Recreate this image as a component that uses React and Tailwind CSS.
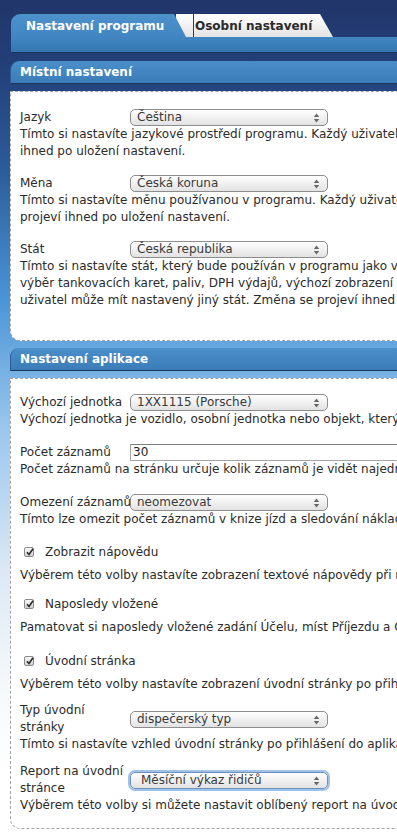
import React from 'react';

const panelText = "text-[12px] leading-[17px] text-[#2b2b2b] whitespace-nowrap";

function Arrows() {
  return (
    <svg width="7" height="10" viewBox="0 0 7 10" className="absolute right-[7px] top-[3px]">
      <path d="M3.5 0.5 L6.2 4 L0.8 4 Z" fill="#666" />
      <path d="M3.5 9.5 L6.2 6 L0.8 6 Z" fill="#666" />
    </svg>
  );
}

function Select({ value, focused }) {
  return (
    <div
      className={
        focused
          ? "relative shrink-0 w-[198px] h-[17px] rounded-[5px] border border-[#6f8fb5] bg-[linear-gradient(#ffffff,#e2e2e2)] shadow-[0_0_0_2px_#9ec2e9] flex items-center pl-[10px] text-[12px] text-[#3a3a3a]"
          : "relative shrink-0 w-[198px] h-[17px] rounded-[5px] border border-[#8d8d8d] bg-[linear-gradient(#ffffff,#e2e2e2)] flex items-center pl-[6px] text-[12px] text-[#3a3a3a]"
      }
    >
      <span className="whitespace-nowrap">{value}</span>
      <Arrows />
    </div>
  );
}

function Checkbox() {
  return (
    <div className="relative shrink-0 w-[10px] h-[10px] rounded-[2px] border border-[#8a8a8a] bg-[linear-gradient(#fafafa,#cfcfcf)]">
      <svg width="10" height="10" viewBox="0 0 10 10" className="absolute left-[0px] top-[-1px]">
        <path d="M2 5.2 L4 7.5 L8 1.8" fill="none" stroke="#2a2a2a" strokeWidth="1.6" />
      </svg>
    </div>
  );
}

function Desc({ lines }) {
  return (
    <div className={`pl-[9px] ${panelText}`}>
      {lines.map((l) => (
        <div key={l}>{l}</div>
      ))}
    </div>
  );
}

function SelectRow({ label, value, lines, focused, className }) {
  return (
    <div className={className}>
      <div className="flex items-center h-[18px]">
        <div className="w-[119px] shrink-0 pl-[9px] text-[12px] text-[#2b2b2b] whitespace-nowrap">{label}</div>
        <Select value={value} focused={focused} />
      </div>
      <Desc lines={lines} />
    </div>
  );
}

function TwoLineRow({ label, value, line, focused, className }) {
  return (
    <div className={className}>
      <div className="flex items-center">
        <div className="w-[119px] shrink-0 pl-[9px] text-[12px] leading-[17px] text-[#2b2b2b]">
          <div>{label[0]}</div>
          <div>{label[1]}</div>
        </div>
        <Select value={value} focused={focused} />
      </div>
      <Desc lines={[line]} />
    </div>
  );
}

function CheckRow({ label, line, className }) {
  return (
    <div className={className}>
      <div className="flex items-center h-[20px] pl-[13px] gap-[11px]">
        <Checkbox />
        <span className="text-[12px] text-[#2b2b2b] whitespace-nowrap">{label}</span>
      </div>
      <div className="mt-[5px]">
        <Desc lines={[line]} />
      </div>
    </div>
  );
}

function Header({ title, className }) {
  return (
    <div className={`h-[23px] rounded-tl-[9px] bg-[linear-gradient(#4b8fca,#3a7cb7)] border-b border-[#1b355a] border-l border-l-[#2d5e92] flex items-center pl-[9px] ${className}`}>
      <span className="text-[12px] font-bold text-white whitespace-nowrap">{title}</span>
    </div>
  );
}

export default function App() {
  return (
    <div className="w-full min-h-screen overflow-hidden font-['DejaVu_Sans',sans-serif] bg-[linear-gradient(180deg,#21366a_0px,#23407a_70px,#2c5c9a_170px,#4a95d6_300px,#9bc7ed_430px,#dbe8f5_570px,#f6f9fc_690px,#ffffff_780px)]">
      <div className="w-[900px] pl-[10px] pt-[14px] pb-[8px]">
        {/* tabs */}
        <div className="flex h-[23px] ml-[1px]">
          <div className="relative z-10 w-[175px] h-full rounded-tl-[9px] bg-[linear-gradient(#4e92cc,#4186c2)] [clip-path:polygon(0_0,163px_0,175px_100%,0_100%)] flex items-center pl-[15px]">
            <span className="text-[12px] font-bold text-white whitespace-nowrap">Nastavení programu</span>
          </div>
          <div className="relative -ml-[10px] w-[157px] h-full rounded-tr-[6px] bg-[linear-gradient(#ffffff,#e4e4e4)] [clip-path:polygon(0_0,144px_0,157px_100%,0_100%)] pl-[17px]">
            <div className="h-full border-l border-[#2b3d5a] flex items-center pl-[1px]">
              <span className="text-[12px] font-bold text-[#2a2a2a] whitespace-nowrap">Osobní nastavení</span>
            </div>
          </div>
        </div>
        <div className="ml-[1px] h-[16px] bg-[linear-gradient(#4186c2,#3476b0)] border-b border-[#1b355a]" />

        {/* Místní nastavení */}
        <Header title="Místní nastavení" className="mt-[8px]" />
        <div className="mt-[7px] bg-white border border-dashed border-[#a3a3a3] rounded-bl-[10px] pt-[16px] pb-[31px]">
          <SelectRow
            label="Jazyk"
            value="Čeština"
            lines={[
              "Tímto si nastavíte jazykové prostředí programu. Každý uživatel může mít nastavený jiný jazyk. Změna se projeví",
              "ihned po uložení nastavení.",
            ]}
          />
          <SelectRow
            className="mt-[14px]"
            label="Měna"
            value="Česká koruna"
            lines={[
              "Tímto si nastavíte měnu používanou v programu. Každý uživatel může mít nastavenou jinou měnu. Změna se",
              "projeví ihned po uložení nastavení.",
            ]}
          />
          <SelectRow
            className="mt-[14px]"
            label="Stát"
            value="Česká republika"
            lines={[
              "Tímto si nastavíte stát, který bude používán v programu jako výchozí. Podle státu se nastavuje",
              "výběr tankovacích karet, paliv, DPH výdajů, výchozí zobrazení map a další. Každý",
              "uživatel může mít nastavený jiný stát. Změna se projeví ihned po uložení nastavení.",
            ]}
          />
        </div>

        {/* Nastavení aplikace */}
        <Header title="Nastavení aplikace" className="mt-[7px]" />
        <div className="mt-[7px] bg-white border border-dashed border-[#a3a3a3] rounded-bl-[10px] pt-[14px] pb-[14px]">
          <SelectRow
            label="Výchozí jednotka"
            value="1XX1115 (Porsche)"
            lines={["Výchozí jednotka je vozidlo, osobní jednotka nebo objekt, který se zobrazí po přihlášení."]}
          />
          <div className="mt-[15px]">
            <div className="flex items-center h-[18px]">
              <div className="w-[119px] shrink-0 pl-[9px] text-[12px] text-[#2b2b2b] whitespace-nowrap">Počet záznamů</div>
              <div className="w-[300px] h-[17px] border border-[#a5a5a5] border-t-[#7d7d7d] bg-white flex items-center pl-[2px] text-[12px] text-[#222]">
                30
              </div>
            </div>
            <Desc lines={["Počet záznamů na stránku určuje kolik záznamů je vidět najednou."]} />
          </div>
          <SelectRow
            className="mt-[15px]"
            label="Omezení záznamů"
            value="neomezovat"
            lines={["Tímto lze omezit počet záznamů v knize jízd a sledování nákladů."]}
          />
          <CheckRow
            className="mt-[14px]"
            label="Zobrazit nápovědu"
            line="Výběrem této volby nastavíte zobrazení textové nápovědy při najetí myší."
          />
          <CheckRow
            className="mt-[10px]"
            label="Naposledy vložené"
            line="Pamatovat si naposledy vložené zadání Účelu, míst Příjezdu a Odjezdu."
          />
          <CheckRow
            className="mt-[15px]"
            label="Úvodní stránka"
            line="Výběrem této volby nastavíte zobrazení úvodní stránky po přihlášení."
          />
          <TwoLineRow
            className="mt-[9px]"
            label={["Typ úvodní", "stránky"]}
            value="dispečerský typ"
            line="Tímto si nastavíte vzhled úvodní stránky po přihlášení do aplikace."
          />
          <TwoLineRow
            className="mt-[10px]"
            label={["Report na úvodní", "stránce"]}
            value="Měsíční výkaz řidičů"
            focused
            line="Výběrem této volby si můžete nastavit oblíbený report na úvodní stránce."
          />
        </div>
      </div>
    </div>
  );
}
